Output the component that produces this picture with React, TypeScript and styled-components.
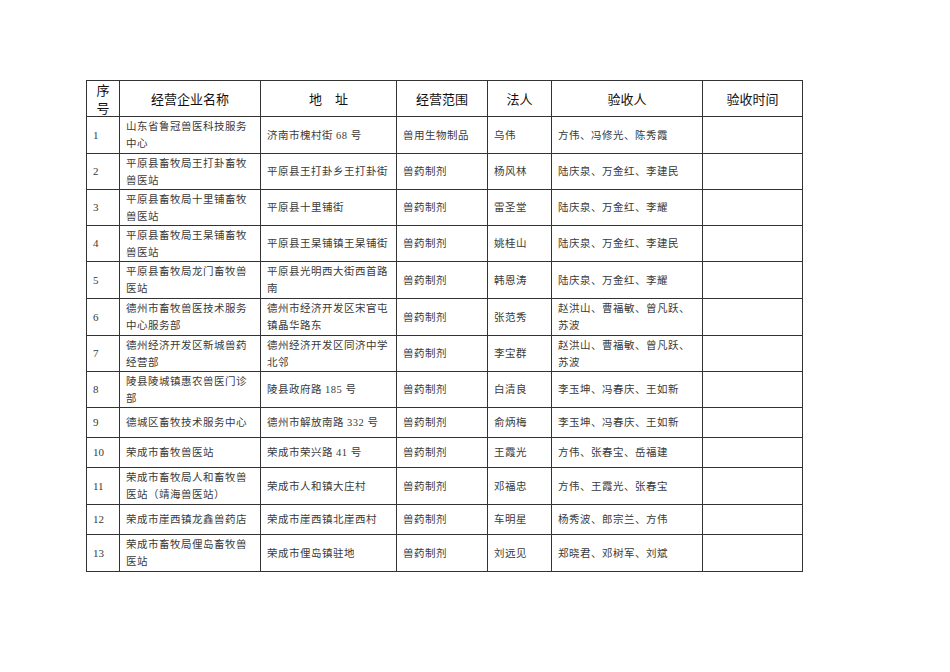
import React from "react";
import styled, { createGlobalStyle } from "styled-components";

const GlobalStyle = createGlobalStyle`
  html, body {
    margin: 0;
    padding: 0;
    background: #ffffff;
  }
`;

const Page = styled.div`
  width: 950px;
  height: 672px;
  padding: 80px 0 0 86px;
  box-sizing: border-box;
`;

const Table = styled.table`
  border-collapse: collapse;
  table-layout: fixed;
  width: 716px;
  border: 1px solid #111;
`;

const HeadCell = styled.th`
  border: 1px solid #333;
  height: 35px;
  padding: 0;
  font-family: "Noto Sans CJK SC", "Liberation Sans", sans-serif;
  font-size: 13px;
  font-weight: 400;
  line-height: 17.5px;
  color: #111;
  text-align: center;
  vertical-align: middle;
`;

const Row = styled.tr<{ $h: number }>`
  height: ${(p) => p.$h}px;
`;

const Cell = styled.td`
  border: 1px solid #333;
  padding: 0 5px 0 6px;
  font-family: "Liberation Serif", "Noto Sans CJK SC", serif;
  font-size: 10.5px;
  letter-spacing: 0.5px;
  line-height: 17px;
  color: #3a3a3a;
  text-align: left;
  vertical-align: middle;
  word-break: break-all;
`;

const NumCell = styled(Cell)`
  font-size: 11px;
  letter-spacing: 0;
  padding-left: 6px;
`;

const widths = [33, 141, 136, 91, 64, 151, 100];

interface IRecord {
  no: number;
  name: string;
  address: string;
  scope: string;
  legal: string;
  checkers: string;
  h: number;
}

const records: IRecord[] = [
  { no: 1, name: "山东省鲁冠兽医科技服务中心", address: "济南市槐村街 68 号", scope: "兽用生物制品", legal: "乌伟", checkers: "方伟、冯修光、陈秀霞", h: 37 },
  { no: 2, name: "平原县畜牧局王打卦畜牧兽医站", address: "平原县王打卦乡王打卦街", scope: "兽药制剂", legal: "杨风林", checkers: "陆庆泉、万金红、李建民", h: 36 },
  { no: 3, name: "平原县畜牧局十里铺畜牧兽医站", address: "平原县十里铺街", scope: "兽药制剂", legal: "雷圣堂", checkers: "陆庆泉、万金红、李耀", h: 36 },
  { no: 4, name: "平原县畜牧局王杲铺畜牧兽医站", address: "平原县王杲铺镇王杲铺街", scope: "兽药制剂", legal: "姚桂山", checkers: "陆庆泉、万金红、李建民", h: 36 },
  { no: 5, name: "平原县畜牧局龙门畜牧兽医站", address: "平原县光明西大街西首路南", scope: "兽药制剂", legal: "韩恩涛", checkers: "陆庆泉、万金红、李耀", h: 37 },
  { no: 6, name: "德州市畜牧兽医技术服务中心服务部", address: "德州市经济开发区宋官屯镇晶华路东", scope: "兽药制剂", legal: "张范秀", checkers: "赵洪山、曹福敏、曾凡跃、苏波", h: 37 },
  { no: 7, name: "德州经济开发区新城兽药经营部", address: "德州经济开发区同济中学北邻", scope: "兽药制剂", legal: "李宝群", checkers: "赵洪山、曹福敏、曾凡跃、苏波", h: 36 },
  { no: 8, name: "陵县陵城镇惠农兽医门诊部", address: "陵县政府路 185 号", scope: "兽药制剂", legal: "白清良", checkers: "李玉坤、冯春庆、王如新", h: 36 },
  { no: 9, name: "德城区畜牧技术服务中心", address: "德州市解放南路 332 号", scope: "兽药制剂", legal: "俞炳梅", checkers: "李玉坤、冯春庆、王如新", h: 30 },
  { no: 10, name: "荣成市畜牧兽医站", address: "荣成市荣兴路 41 号", scope: "兽药制剂", legal: "王霞光", checkers: "方伟、张春宝、岳福建", h: 30 },
  { no: 11, name: "荣成市畜牧局人和畜牧兽医站（靖海兽医站）", address: "荣成市人和镇大庄村", scope: "兽药制剂", legal: "邓福忠", checkers: "方伟、王霞光、张春宝", h: 37 },
  { no: 12, name: "荣成市崖西镇龙鑫兽药店", address: "荣成市崖西镇北崖西村", scope: "兽药制剂", legal: "车明星", checkers: "杨秀波、郎宗兰、方伟", h: 30 },
  { no: 13, name: "荣成市畜牧局俚岛畜牧兽医站", address: "荣成市俚岛镇驻地", scope: "兽药制剂", legal: "刘远见", checkers: "郑晓君、邓树军、刘斌", h: 37 },
];

export default function App() {
  return (
    <Page>
      <GlobalStyle />
      <Table>
        <colgroup>
          {widths.map((w, i) => (
            <col key={i} style={{ width: w }} />
          ))}
        </colgroup>
        <thead>
          <tr>
            <HeadCell>
              序
              <br />号
            </HeadCell>
            <HeadCell>经营企业名称</HeadCell>
            <HeadCell>地　址</HeadCell>
            <HeadCell>经营范围</HeadCell>
            <HeadCell>法人</HeadCell>
            <HeadCell>验收人</HeadCell>
            <HeadCell>验收时间</HeadCell>
          </tr>
        </thead>
        <tbody>
          {records.map((r) => (
            <Row key={r.no} $h={r.h}>
              <NumCell>{r.no}</NumCell>
              <Cell>{r.name}</Cell>
              <Cell>{r.address}</Cell>
              <Cell>{r.scope}</Cell>
              <Cell>{r.legal}</Cell>
              <Cell>{r.checkers}</Cell>
              <Cell></Cell>
            </Row>
          ))}
        </tbody>
      </Table>
    </Page>
  );
}
